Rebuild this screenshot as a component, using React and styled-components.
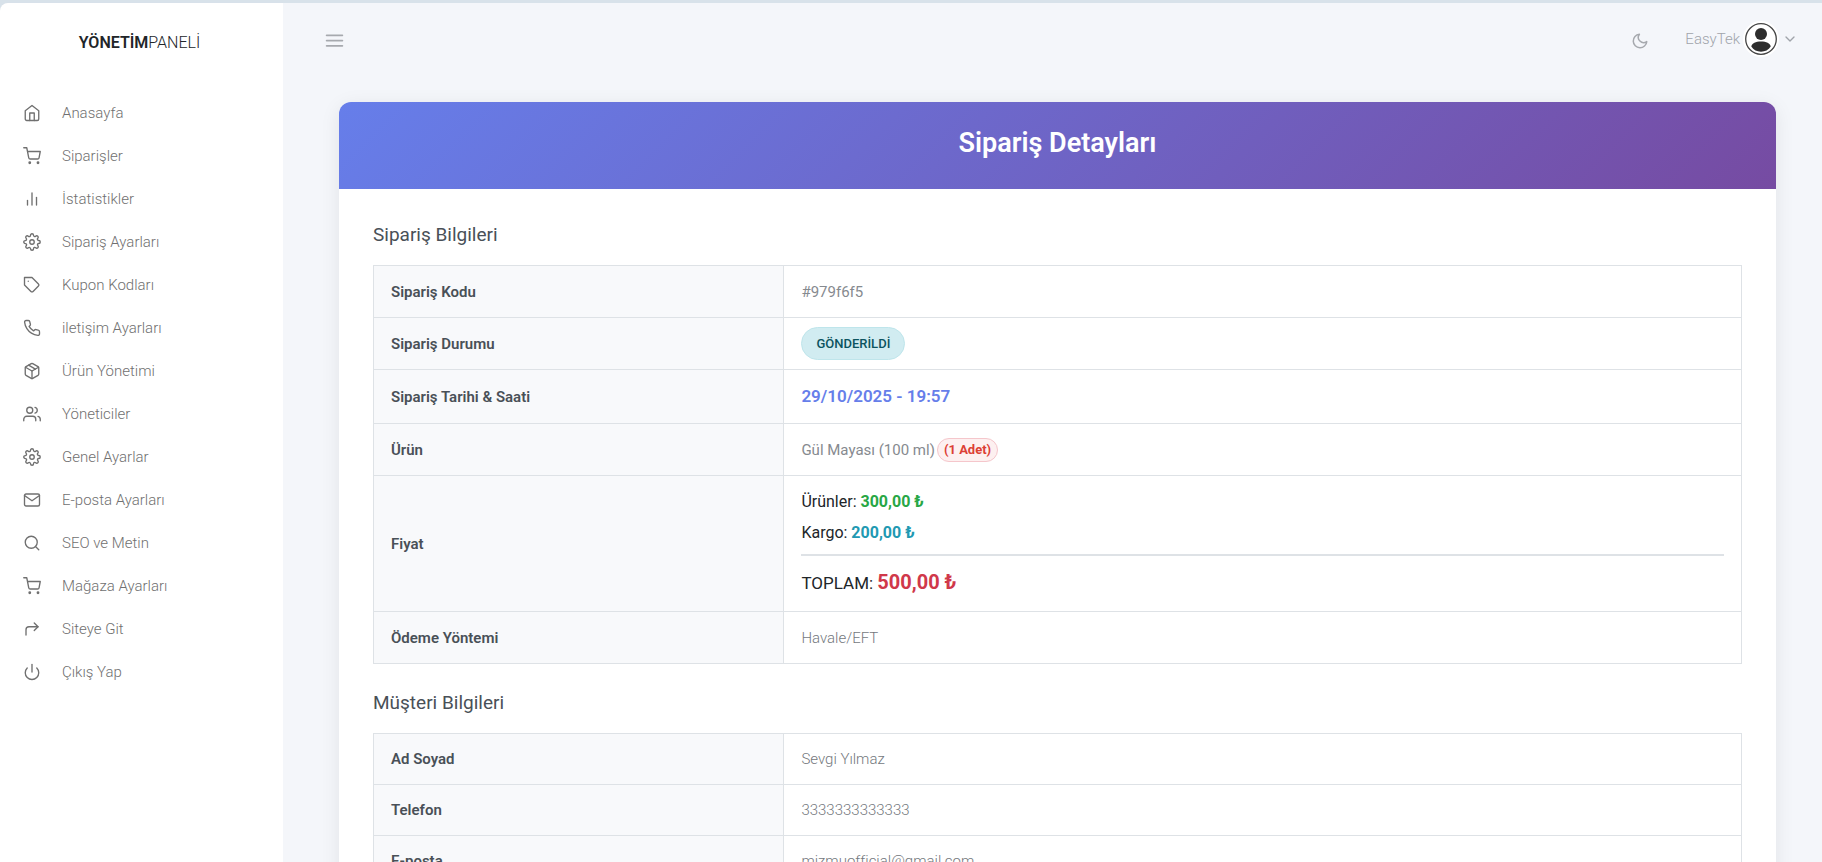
import React from "react";
import styled, { createGlobalStyle } from "styled-components";
import {
  FiHome,
  FiShoppingCart,
  FiBarChart2,
  FiSettings,
  FiTag,
  FiPhone,
  FiPackage,
  FiUsers,
  FiMail,
  FiSearch,
  FiCornerUpRight,
  FiPower,
  FiMoon,
  FiMenu,
  FiChevronDown,
} from "react-icons/fi";

const GlobalStyle = createGlobalStyle`
  *, *::before, *::after { box-sizing: border-box; }
  body {
    margin: 0;
    background: #d8e2ea;
    color: #212529;
    font: 300 15px/24px Roboto, "Noto Sans", sans-serif;
  }
  h1, h2, p { margin: 0; }
`;

const Shell = styled.div`
  display: flex;
  height: 100vh;
  border-top: 3px solid #d8e2ea;
`;

const Sidebar = styled.aside`
  flex: 0 0 283px;
  display: flex;
  flex-direction: column;
  background: #fff;
  border-top-left-radius: 8px;
  box-shadow: 0 0 1px #dcdfe6;
  overflow: hidden;
`;

const Brand = styled.a`
  padding: 28px 0 0;
  margin-right: 4px;
  text-align: center;
  color: #212529;
  text-decoration: none;
  font-size: 16px;
  font-weight: 300;

  b {
    font-weight: 600;
  }
`;

const Menu = styled.ul`
  list-style: none;
  margin: 36px 0 0;
  padding: 0;
`;

const MenuLink = styled.a`
  display: flex;
  align-items: center;
  gap: 21px;
  height: 43px;
  padding-left: 23px;
  color: #707070;
  text-decoration: none;

  svg {
    width: 18px;
    height: 18px;
  }
`;

const Page = styled.div`
  flex: 1;
  min-width: 0;
  display: flex;
  flex-direction: column;
  background: #f4f6fa;
`;

const Topbar = styled.header`
  flex: none;
  display: flex;
  align-items: center;
  justify-content: space-between;
  height: 75px;
  padding: 0 24px 0 41px;
`;

const IconButton = styled.button`
  display: inline-flex;
  padding: 0;
  border: 0;
  background: none;
  color: #a6a9ae;
  cursor: pointer;
`;

const TopbarActions = styled.div`
  display: flex;
  align-items: center;
  gap: 36px;
`;

const UserButton = styled.button`
  display: flex;
  align-items: center;
  gap: 3px;
  padding: 0 0 4px;
  border: 0;
  background: none;
  color: #a0a4aa;
  font: inherit;
  cursor: pointer;
`;

const Content = styled.main`
  flex: 1;
  min-height: 0;
  overflow-y: auto;
  scrollbar-width: none;
  padding: 24px 46px 28px 56px;
`;

const Card = styled.section`
  background: #fff;
  border-radius: 12px;
  box-shadow: 0 4px 20px rgba(0, 0, 0, 0.08);
`;

const CardHeader = styled.header`
  padding: 21px 32px 26px;
  border-radius: 12px 12px 0 0;
  background: linear-gradient(135deg, #667eea 0%, #764ba2 100%);
  color: #fff;
  text-align: center;
`;

const CardTitle = styled.h1`
  font-size: 27px;
  line-height: 40px;
  font-weight: 600;
`;

const CardBody = styled.div`
  padding: 34px 34px 8px;
`;

const SectionTitle = styled.h2`
  margin-bottom: 18px;
  color: #495057;
  font-size: 19px;
  line-height: 24px;
  font-weight: 400;
`;

const DetailTable = styled.table`
  width: 100%;
  margin-bottom: 27px;
  border-collapse: collapse;
  table-layout: fixed;

  th,
  td {
    height: ${(p) => (p.$compact ? 51 : 52)}px;
    border: 1px solid #dee2e6;
  }
`;

const Label = styled.th`
  width: 30%;
  padding: 9px 17px;
  background: #f8f9fb;
  color: #495057;
  font-weight: 600;
  text-align: left;
`;

const Value = styled.td`
  padding: ${(p) => (p.$roomy ? 14 : 9)}px 17px;
  color: ${(p) => (p.$regular ? "#868a8f" : "#74787d")};
  font-weight: ${(p) => (p.$regular ? 400 : 300)};
`;

const StatusBadge = styled.span`
  display: block;
  width: fit-content;
  padding: 4px 14px;
  border: 1px solid #bee5eb;
  border-radius: 20px;
  background: #d1ecf1;
  color: #0c5460;
  font-size: 13px;
  line-height: 23px;
  font-weight: 500;
`;

const DateText = styled.time`
  display: block;
  color: #667eea;
  font-size: 17px;
  line-height: 35px;
  font-weight: 600;
`;

const Product = styled.div`
  display: flex;
  align-items: center;
  gap: 2px;
`;

const Quantity = styled.span`
  padding: 0 6px;
  border: 1px solid #f5c6cb;
  border-radius: 12px;
  background: #fdf0f0;
  color: #dc3f35;
  font-size: 13px;
  line-height: 22px;
  font-weight: 700;
`;

const amountColors = { products: "#28a745", shipping: "#2199b2", total: "#d0384a" };

const PriceLine = styled.p`
  color: #212529;
  font-size: 16px;
  font-weight: 400;

  & + & {
    margin-top: 7px;
  }
`;

const TotalLine = styled.p`
  margin-top: 9px;
  padding-top: 12px;
  border-top: 2px solid #dee2e6;
  color: #212529;
  font-size: 17px;
  line-height: 28px;
  font-weight: 400;
`;

const Amount = styled.strong`
  color: ${(p) => amountColors[p.$kind]};
  font-size: ${(p) => (p.$kind === "total" ? "20px" : "inherit")};
  font-weight: 700;
`;

const menuItems = [
  [FiHome, "Anasayfa"],
  [FiShoppingCart, "Siparişler"],
  [FiBarChart2, "İstatistikler"],
  [FiSettings, "Sipariş Ayarları"],
  [FiTag, "Kupon Kodları"],
  [FiPhone, "iletişim Ayarları"],
  [FiPackage, "Ürün Yönetimi"],
  [FiUsers, "Yöneticiler"],
  [FiSettings, "Genel Ayarlar"],
  [FiMail, "E-posta Ayarları"],
  [FiSearch, "SEO ve Metin"],
  [FiShoppingCart, "Mağaza Ayarları"],
  [FiCornerUpRight, "Siteye Git"],
  [FiPower, "Çıkış Yap"],
];

const Avatar = () => (
  <svg width="36" height="36" viewBox="0 0 36 36" aria-hidden="true">
    <circle cx="18" cy="18" r="18" fill="#fff" />
    <circle cx="18" cy="18" r="15.3" fill="#fff" stroke="#444" strokeWidth="1.3" />
    <circle cx="18" cy="13" r="6" fill="#2d2d2d" />
    <path d="M8.3 25.6C9 22 12.600 20.500 18 20.500s9 1.500 9.700 5.100C25.600 29 22 30.800 18 30.800S10.400 29 8.300 25.600Z" fill="#2d2d2d" />
  </svg>
);

const Row = ({ label, children, ...rest }) => (
  <tr>
    <Label scope="row">{label}</Label>
    <Value {...rest}>{children}</Value>
  </tr>
);

export default function App() {
  return (
    <>
      <GlobalStyle />
      <Shell lang="tr">
        <Sidebar>
          <Brand href="#">
            <b>YÖNETİM</b>PANELİ
          </Brand>
          <nav>
            <Menu>
              {menuItems.map(([Icon, label]) => (
                <li key={label}>
                  <MenuLink href="#">
                    <Icon strokeWidth={1.8} />
                    {label}
                  </MenuLink>
                </li>
              ))}
            </Menu>
          </nav>
        </Sidebar>
        <Page>
          <Topbar>
            <IconButton type="button" aria-label="Menü">
              <FiMenu size={21} />
            </IconButton>
            <TopbarActions>
              <IconButton type="button" aria-label="Karanlık mod">
                <FiMoon size={18} />
              </IconButton>
              <UserButton type="button">
                EasyTek
                <Avatar />
                <FiChevronDown size={16} />
              </UserButton>
            </TopbarActions>
          </Topbar>
          <Content>
            <Card>
              <CardHeader>
                <CardTitle>Sipariş Detayları</CardTitle>
              </CardHeader>
              <CardBody>
                <SectionTitle>Sipariş Bilgileri</SectionTitle>
                <DetailTable>
                  <tbody>
                    <Row label="Sipariş Kodu" $regular>#979f6f5</Row>
                    <Row label="Sipariş Durumu">
                      <StatusBadge>GÖNDERİLDİ</StatusBadge>
                    </Row>
                    <Row label="Sipariş Tarihi & Saati">
                      <DateText dateTime="2025-10-29T19:57">29/10/2025 - 19:57</DateText>
                    </Row>
                    <Row label="Ürün" $regular>
                      <Product>
                        Gül Mayası (100 ml)
                        <Quantity>(1 Adet)</Quantity>
                      </Product>
                    </Row>
                    <Row label="Fiyat" $roomy>
                      <PriceLine>
                        Ürünler: <Amount $kind="products">300,00 ₺</Amount>
                      </PriceLine>
                      <PriceLine>
                        Kargo: <Amount $kind="shipping">200,00 ₺</Amount>
                      </PriceLine>
                      <TotalLine>
                        TOPLAM: <Amount $kind="total">500,00 ₺</Amount>
                      </TotalLine>
                    </Row>
                    <Row label="Ödeme Yöntemi">Havale/EFT</Row>
                  </tbody>
                </DetailTable>
                <SectionTitle>Müşteri Bilgileri</SectionTitle>
                <DetailTable $compact>
                  <tbody>
                    <Row label="Ad Soyad">Sevgi Yılmaz</Row>
                    <Row label="Telefon">3333333333333</Row>
                    <Row label="E-posta">mizmuofficial@gmail.com</Row>
                  </tbody>
                </DetailTable>
              </CardBody>
            </Card>
          </Content>
        </Page>
      </Shell>
    </>
  );
}
